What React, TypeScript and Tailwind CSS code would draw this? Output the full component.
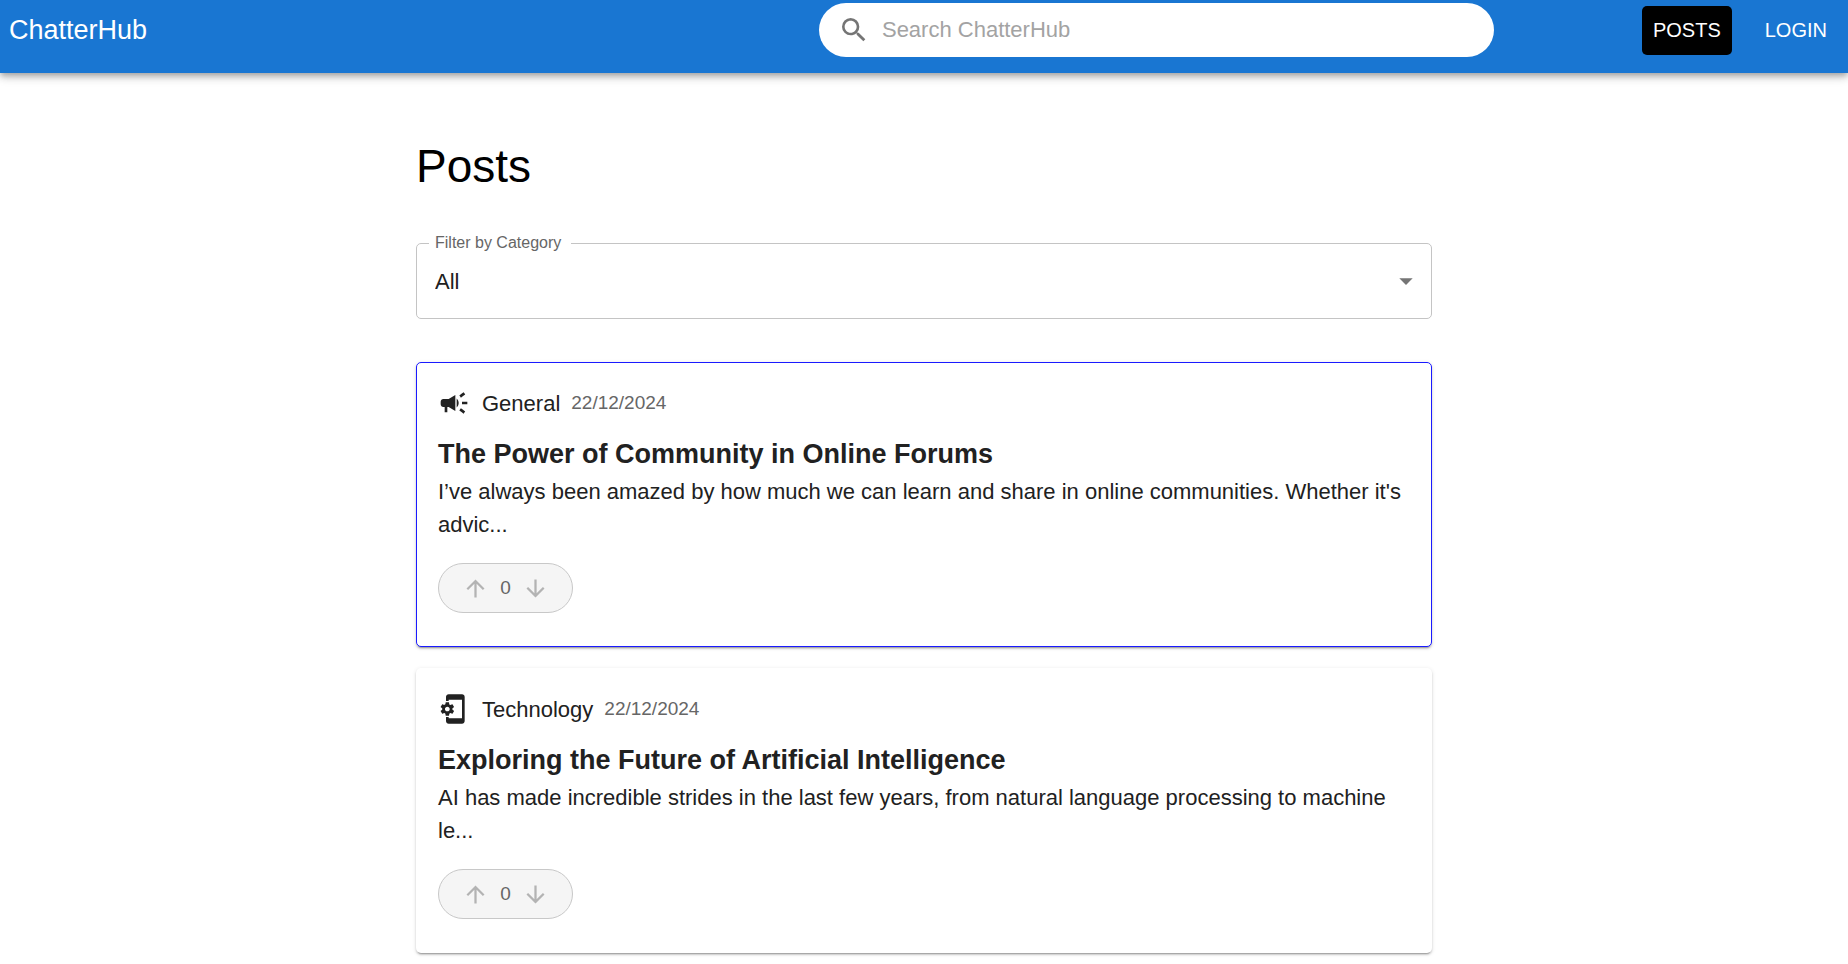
import { useState } from "react";
import { MdArrowDownward, MdArrowDropDown, MdArrowUpward, MdCampaign, MdPhonelinkSetup, MdSearch } from "react-icons/md";
import type { IconType } from "react-icons";

type Post = {
  id: number;
  category: string;
  icon: IconType;
  date: string;
  title: string;
  excerpt: string;
  votes: number;
};

const posts: Post[] = [
  {
    id: 1,
    category: "General",
    icon: MdCampaign,
    date: "22/12/2024",
    title: "The Power of Community in Online Forums",
    excerpt:
      "I’ve always been amazed by how much we can learn and share in online communities. Whether it's advic...",
    votes: 0,
  },
  {
    id: 2,
    category: "Technology",
    icon: MdPhonelinkSetup,
    date: "22/12/2024",
    title: "Exploring the Future of Artificial Intelligence",
    excerpt:
      "AI has made incredible strides in the last few years, from natural language processing to machine le...",
    votes: 0,
  },
];

function Header() {
  return (
    <header className="relative flex items-start bg-[#1976d2] pb-4 text-white shadow-[0_3px_5px_-1px_rgba(0,0,0,0.2),0_5px_7px_0_rgba(0,0,0,0.14),0_1px_14px_0_rgba(0,0,0,0.12)]">
      <div className="flex h-[57px] flex-1 items-center px-[9px] pt-[2px]">
        <a href="#home" className="text-[27px] leading-8">
          ChatterHub
        </a>
      </div>
      <label className="mt-[3px] flex h-[54px] w-[675px] items-center rounded-full bg-white pl-[19px] pr-5">
        <MdSearch className="size-8 shrink-0 text-[#757575]" />
        <input
          type="search"
          aria-label="Search"
          placeholder="Search ChatterHub"
          className="ml-3 min-w-0 flex-1 bg-transparent pb-[2px] text-[22px] text-[#212121] outline-none placeholder:text-[#a3a3a3]"
        />
      </label>
      <nav className="ml-[148px] mt-[6px] flex gap-[22px] pr-[10px]">
        <button type="button" className="h-[49px] rounded-[5px] bg-black px-[11px] pb-[2px] text-[20px]">
          POSTS
        </button>
        <button type="button" className="h-[49px] rounded-[5px] px-[11px] pb-[2px] text-[20px]">
          LOGIN
        </button>
      </nav>
    </header>
  );
}

function CategoryFilter() {
  const [category, setCategory] = useState("All");
  return (
    <div className="relative mt-[40px]">
      <fieldset className="rounded-[5px] border border-[#c4c4c4] pl-3">
        <legend className="h-[19px] pl-[6px] pr-[10px] text-[16px] leading-[17px] text-[#666666]">
          <label htmlFor="category">Filter by Category</label>
        </legend>
        <select
          id="category"
          value={category}
          onChange={(e) => setCategory(e.target.value)}
          className="block h-[65px] w-full appearance-none bg-transparent pb-[9px] pl-[6px] text-[22px] text-[#212121] outline-none"
        >
          <option>All</option>
          <option>General</option>
          <option>Technology</option>
        </select>
      </fieldset>
      <MdArrowDropDown className="pointer-events-none absolute right-[10px] top-[31px] size-8 text-[#757575]" />
    </div>
  );
}

function PostCard({ post, selected }: { post: Post; selected: boolean }) {
  const Icon = post.icon;
  return (
    <article
      className={`rounded-[5px] border bg-white px-[21px] pb-[33px] pt-[20px] text-[#212121] shadow-[0_3px_1px_-2px_rgba(0,0,0,0.2),0_2px_2px_0_rgba(0,0,0,0.14),0_1px_4px_0_rgba(0,0,0,0.12)] ${
        selected ? "border-[#1a1aff]" : "border-transparent"
      }`}
    >
      <div className="flex h-10 items-center">
        <Icon className="size-8 shrink-0" />
        <span className="ml-3 text-[22px]">{post.category}</span>
        <span className="ml-[11px] text-[19px] text-[#666666]">{post.date}</span>
      </div>
      <h2 className="mt-[10px] text-[27px] font-bold leading-[42px]">{post.title}</h2>
      <p className="text-[22px] leading-[33px]">{post.excerpt}</p>
      <div className="mt-[22px] flex h-[50px] w-[135px] items-center justify-center gap-[11px] rounded-[27px] border border-[#c8c8c8] bg-[#f5f5f5] text-[#b3b3b3]">
        <button type="button" aria-label="Upvote">
          <MdArrowUpward className="size-[27px]" />
        </button>
        <span className="text-[19px] text-[#666666]">{post.votes}</span>
        <button type="button" aria-label="Downvote">
          <MdArrowDownward className="size-[27px]" />
        </button>
      </div>
    </article>
  );
}

export default function App() {
  return (
    <div className="min-h-screen bg-white font-['Liberation_Sans',Arial,sans-serif]">
      <Header />
      <main className="mx-auto max-w-[1016px] pt-[65px]">
        <h1 className="text-[46px] leading-[56px] text-black">Posts</h1>
        <CategoryFilter />
        <div className="mt-[43px] flex flex-col gap-[21px]">
          {posts.map((post, i) => (
            <PostCard key={post.id} post={post} selected={i === 0} />
          ))}
        </div>
      </main>
    </div>
  );
}
